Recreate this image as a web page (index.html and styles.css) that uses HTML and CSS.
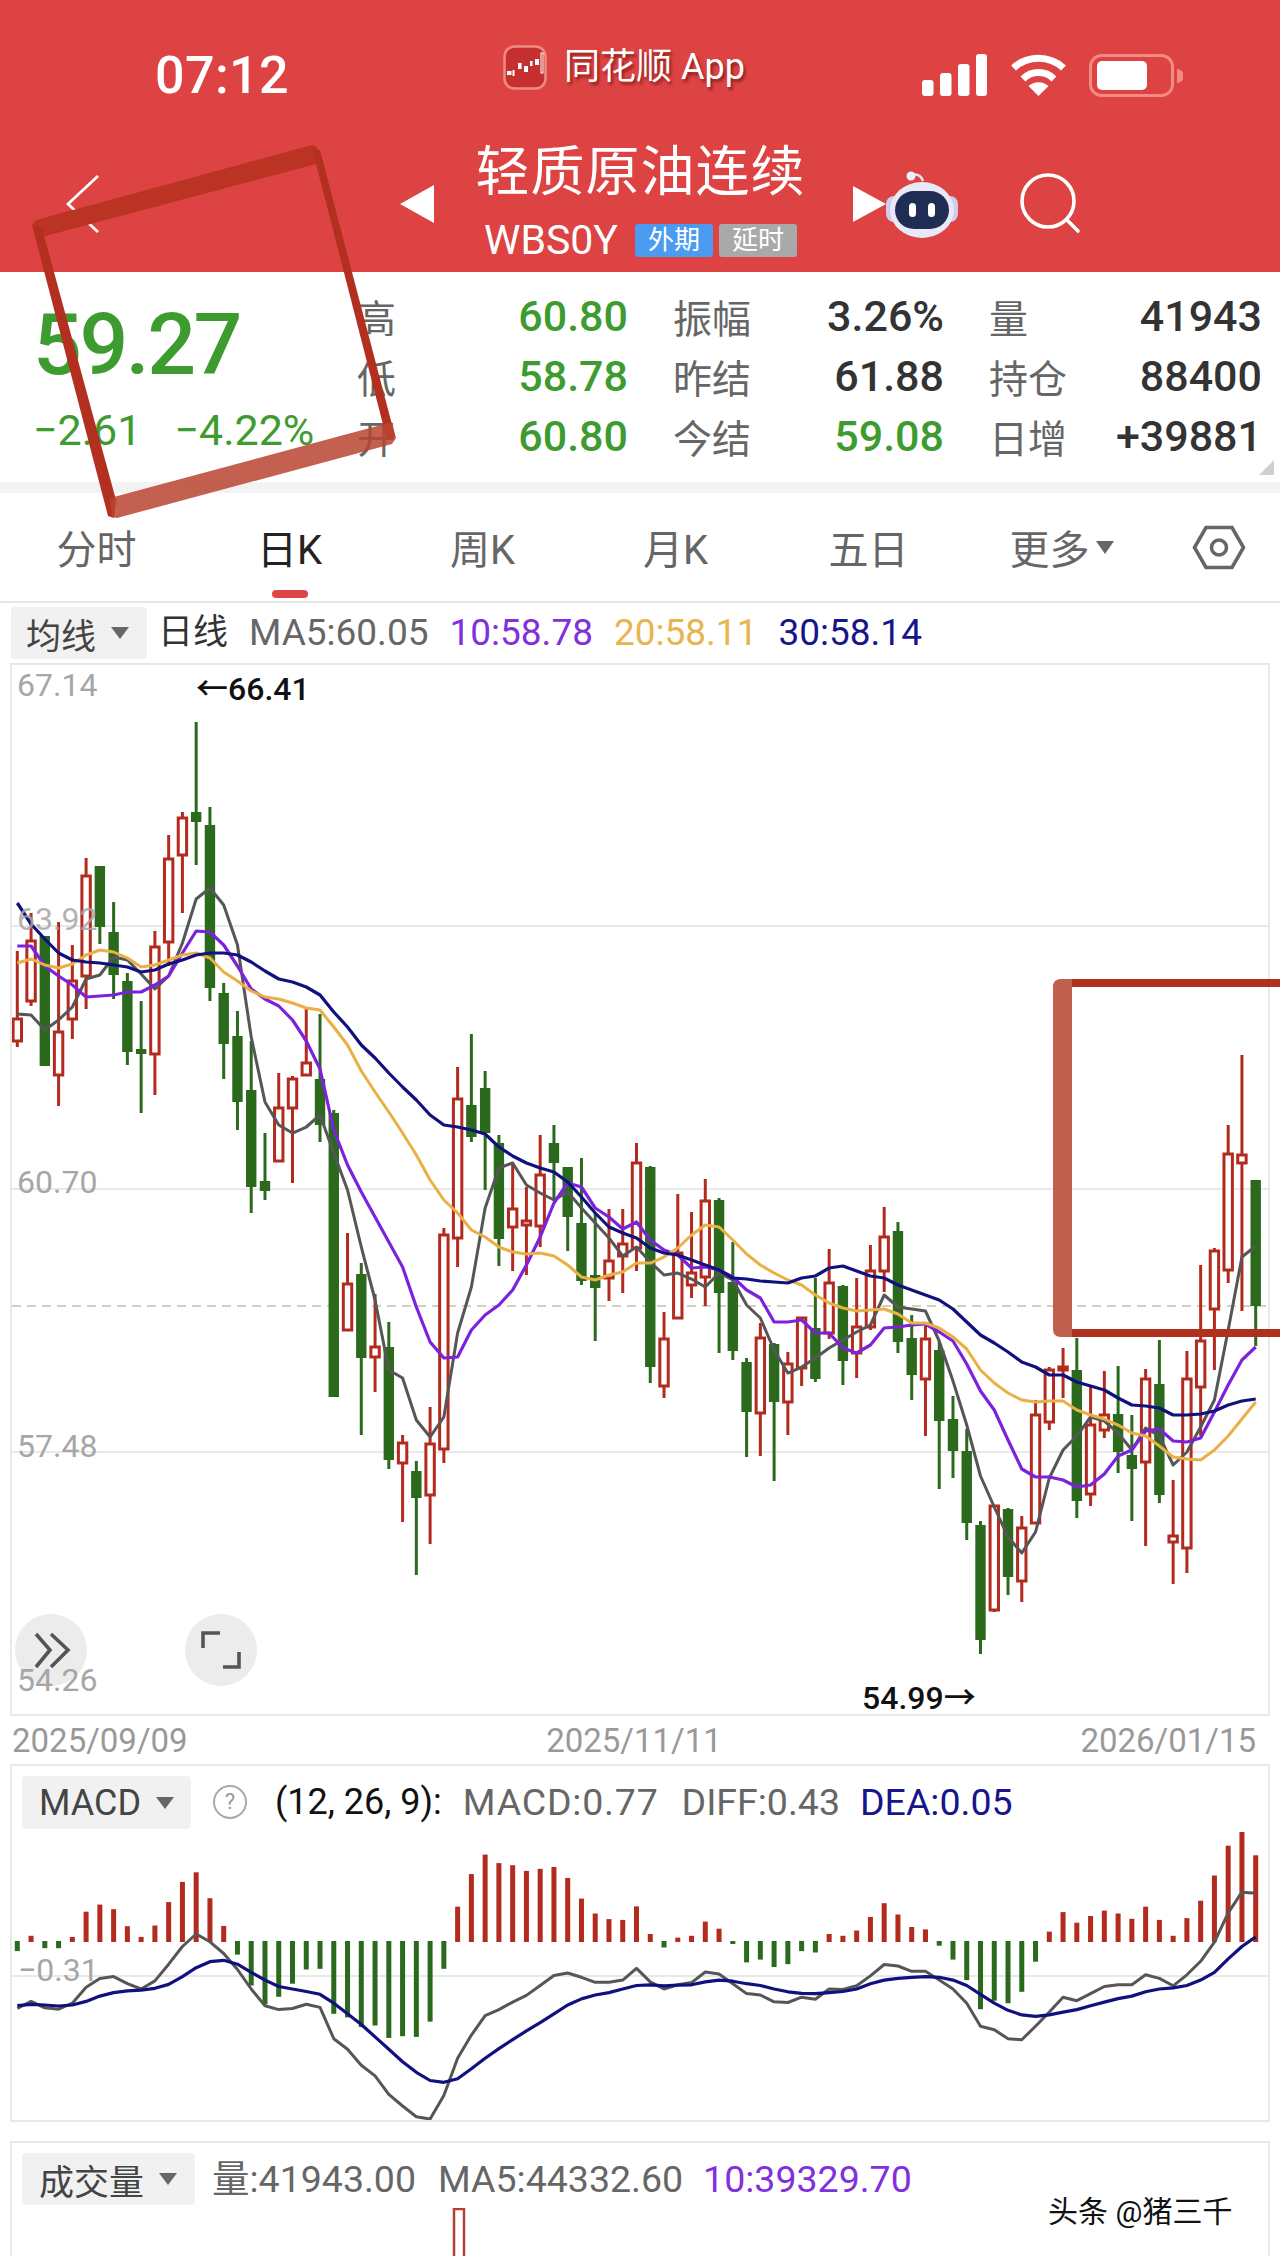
FILE: index.html
```html
<!DOCTYPE html>
<html lang="zh-CN">
<head>
<meta charset="utf-8">
<title>轻质原油连续 WBS0Y</title>
<link rel="stylesheet" href="styles.css">
</head>
<body>
<div class="page">
  <header class="head">
    <div class="status">
      <div class="time">07:12</div>
      <div class="app">
        <svg class="app-logo" width="44" height="45" viewBox="0 0 44 45">
          <rect x="1.5" y="1.5" width="41" height="42" rx="10" fill="#c62f2f" stroke="#f08a84" stroke-width="2.5"/>
          <g fill="#fff">
            <rect x="4" y="26" width="4.5" height="4"/><rect x="9.5" y="25" width="2" height="6"/>
            <rect x="15" y="18" width="3.5" height="6"/><rect x="21" y="21" width="4" height="6"/>
            <rect x="27" y="16" width="2.5" height="5"/><rect x="32" y="14" width="4" height="6"/>
          </g>
          <rect x="38" y="8" width="2" height="20" fill="none" stroke="#fff"/>
        </svg>
        <span class="app-name">同花顺 App</span>
      </div>
      <div class="sys">
        <svg width="65" height="42" viewBox="0 0 65 42" fill="#fff">
          <rect x="0" y="26" width="11.5" height="16" rx="3"/><rect x="18" y="19" width="11.5" height="23" rx="3"/>
          <rect x="36" y="10" width="11.5" height="32" rx="3"/><rect x="54" y="0" width="11" height="42" rx="3"/>
        </svg>
        <svg class="sys-wifi" width="57" height="42" viewBox="0 0 57 42" fill="none" stroke="#fff" stroke-width="7">
          <path d="M3.5 14 A37 37 0 0 1 53.5 14"/>
          <path d="M13 25 A22 22 0 0 1 44 25"/>
          <path d="M28.5 42 L18.5 32 A15 15 0 0 1 38.5 32 Z" fill="#fff" stroke="none"/>
        </svg>
        <svg class="sys-bat" width="94" height="43" viewBox="0 0 94 43">
          <rect x="1.5" y="1.5" width="82" height="40" rx="11" fill="none" stroke="#f28b84" stroke-width="3"/>
          <rect x="8" y="7" width="50" height="29" rx="5" fill="#fff"/>
          <path d="M88 15 A7 7 0 0 1 88 29 Z" fill="#f28b84"/>
        </svg>
      </div>
    </div>
    <nav class="nav">
      <svg class="back" width="34" height="60" viewBox="0 0 34 60" fill="none" stroke="#fff" stroke-width="2.8"><path d="M32 2 L2 30 L32 58"/></svg>
      <div class="tri-left"></div>
      <div class="title-block">
        <div class="title">轻质原油连续</div>
        <div class="code-row">
          <span class="code">WBS0Y</span>
          <span class="badge badge-blue">外期</span>
          <span class="badge badge-gray">延时</span>
        </div>
      </div>
      <div class="tri-right"></div>
      <svg class="robot" width="72" height="68" viewBox="0 0 72 68">
        <path d="M25 6 C30 3 35 5 37 11" fill="none" stroke="#e6e4f6" stroke-width="2.5"/>
        <circle cx="25" cy="6" r="4.5" fill="#efeefa"/>
        <rect x="0" y="26" width="72" height="26" rx="8" fill="#cfcdee"/>
        <ellipse cx="36" cy="40" rx="32" ry="28" fill="#e9e8f8"/>
        <rect x="9" y="21" width="54" height="38" rx="19" fill="#1f2d55"/>
        <rect x="23" y="33" width="7" height="14" rx="3.5" fill="#fff"/>
        <rect x="42" y="33" width="7" height="14" rx="3.5" fill="#fff"/>
      </svg>
      <svg class="search" width="62" height="62" viewBox="0 0 62 62" fill="none" stroke="#fff" stroke-width="3.6"><circle cx="28" cy="28" r="26"/><path d="M47 47 L58 58" stroke-linecap="round"/></svg>
    </nav>
  </header>

  <section class="stats">
    <div class="price">
      <div class="price-main">59.27</div>
      <div class="price-sub"><span>−2.61</span><span>−4.22%</span></div>
    </div>
    <div class="quotes">
      <div class="q"><span class="q-l">高</span><span class="q-v green">60.80</span></div>
      <div class="q"><span class="q-l">振幅</span><span class="q-v dark">3.26%</span></div>
      <div class="q"><span class="q-l">量</span><span class="q-v dark">41943</span></div>
      <div class="q"><span class="q-l">低</span><span class="q-v green">58.78</span></div>
      <div class="q"><span class="q-l">昨结</span><span class="q-v dark">61.88</span></div>
      <div class="q"><span class="q-l">持仓</span><span class="q-v dark">88400</span></div>
      <div class="q"><span class="q-l">开</span><span class="q-v green">60.80</span></div>
      <div class="q"><span class="q-l">今结</span><span class="q-v green">59.08</span></div>
      <div class="q"><span class="q-l">日增</span><span class="q-v dark">+39881</span></div>
    </div>
    <div class="corner"></div>
  </section>
  <div class="band"></div>

  <div class="tabs">
    <div class="tab">分时</div>
    <div class="tab tab-on">日K</div>
    <div class="tab">周K</div>
    <div class="tab">月K</div>
    <div class="tab">五日</div>
    <div class="tab">更多<i class="caret caret-more"></i></div>
    <div class="tab">
      <svg width="54" height="45" viewBox="0 0 54 45" fill="none" stroke="#666" stroke-width="3.6"><path d="M14 2.5 H40 L51.5 22.5 L40 42.5 H14 L2.5 22.5 Z"/><circle cx="27" cy="22.5" r="7.5"/></svg>
    </div>
  </div>

  <div class="legend">
    <div class="chip chip-ma">均线<i class="caret"></i></div>
    <span class="leg leg-day">日线</span>
    <span class="leg c-gray">MA5:60.05</span>
    <span class="leg c-purple">10:58.78</span>
    <span class="leg c-yellow">20:58.11</span>
    <span class="leg c-navy">30:58.14</span>
  </div>

  <section class="panel panel-k">
    <svg class="plot" width="1256" height="1049" viewBox="12 665 1256 1049">
      <g class="grid">
        <line x1="12" x2="1268" y1="926" y2="926"/>
        <line x1="12" x2="1268" y1="1189" y2="1189"/>
        <line x1="12" x2="1268" y1="1452" y2="1452"/>
      </g>
      <line class="dash" x1="12" x2="1268" y1="1306" y2="1306"/>
      <g id="candles"></g>
      <g id="malines"></g>
      <circle class="round" cx="51" cy="1650" r="36"/>
      <circle class="round" cx="221" cy="1650" r="36"/>
      <path class="round-ic" d="M36 1634 L50 1650 L36 1667 M51 1634 L68 1650 L51 1667"/>
      <path class="round-ic" d="M203 1648 V1633 H220 M223 1667 H239 V1652"/>
      <text class="axis" x="17" y="696">67.14</text>
      <text class="axis axis-soft" x="17" y="930">63.92</text>
      <text class="axis" x="17" y="1193">60.70</text>
      <text class="axis" x="17" y="1457">57.48</text>
      <text class="axis" x="17" y="1691">54.26</text>
      <text class="extreme" x="196" y="700">←66.41</text>
      <text class="extreme" x="862" y="1709">54.99→</text>
    </svg>
  </section>

  <div class="dates"><span>2025/09/09</span><span>2025/11/11</span><span>2026/01/15</span></div>

  <section class="panel panel-macd">
    <div class="p-head">
      <div class="chip chip-macd">MACD<i class="caret"></i></div>
      <span class="help">?</span>
      <span class="ptxt ptxt-args">(12, 26, 9):</span>
      <span class="ptxt c-gray ptxt-macd">MACD:0.77</span>
      <span class="ptxt c-gray ptxt-diff">DIFF:0.43</span>
      <span class="ptxt c-navy ptxt-dea">DEA:0.05</span>
    </div>
    <svg class="plot" width="1256" height="288" viewBox="12 1832 1256 288">
      <g class="grid"><line x1="12" x2="1268" y1="1976" y2="1976"/></g>
      <g id="macdbars"></g>
      <g id="macdlines"></g>
      <text class="axis" x="18" y="1981">−0.31</text>
    </svg>
  </section>

  <section class="panel panel-vol">
    <div class="p-head">
      <div class="chip chip-vol">成交量<i class="caret"></i></div>
      <span class="ptxt c-gray ptxt-vol">量:41943.00</span>
      <span class="ptxt c-gray ptxt-vma5">MA5:44332.60</span>
      <span class="ptxt c-purple">10:39329.70</span>
    </div>
    <svg class="plot" width="1256" height="60" viewBox="12 2208 1256 60">
      <rect class="vol-bar" x="454" y="2209" width="10" height="70"/>
    </svg>
  </section>

  <div class="mark">头条 @猪三千</div>

  <svg class="notes" width="1280" height="2256" viewBox="0 0 1280 2256">
    <polygon class="note-dark" points="32,225 36,220 312,145 317,147 320,163 38,238"/>
    <polygon class="note-thin" points="32,225 42,228 116,500 114,518 108,516"/>
    <polygon class="note-thin" points="312,148 320,150 395,436 387,440"/>
    <polygon class="note-soft" points="110,498 392,422 396,438 392,444 117,518 112,517"/>
    <path class="note-soft-fill" d="M1072 979 H1061 Q1053 979 1053 987 V1329 Q1053 1337 1061 1337 H1072 Z"/>
    <rect class="note-bar" x="1072" y="979" width="208" height="8"/>
    <rect class="note-bar" x="1072" y="1329" width="208" height="8"/>
  </svg>
</div>
<script src="chart.js"></script>
</body>
</html>
```
FILE: styles.css
```css
* { box-sizing: border-box; }
html, body { margin: 0; padding: 0; background: #fff; }
body { font-family: Roboto, "Noto Sans CJK SC", sans-serif; }
.page { position: relative; width: 1280px; height: 2256px; overflow: hidden; background: #fff; }

/* header */
.head { height: 272px; background: #dd4342; color: #fff; }
.status { height: 130px; display: grid; grid-template-columns: 503px 419px 1fr; }
.time { padding: 50px 0 0 155px; font-size: 52px; line-height: 52px; font-weight: 500; letter-spacing: .4px; }
.app { display: flex; align-items: center; height: 44px; margin-top: 45px; gap: 17px; }
.app-logo { display: block; flex: none; }
.app-name { font-size: 36px; line-height: 44px; white-space: nowrap; text-shadow: 2px 3px 3px rgba(90, 10, 10, .6); }
.sys { display: flex; align-items: flex-start; padding-top: 54px; }
.sys-wifi { margin-left: 23px; }
.sys-bat { margin-left: 22px; }
.nav { height: 142px; padding-top: 6px; display: grid; align-items: center; grid-template-columns: 66px 334px 34px 419px 33px 134px 135px 1fr; }
.back { grid-column: 2; display: block; }
.tri-left { grid-column: 3; width: 0; height: 0; border-style: solid; border-width: 19px 34px 19px 0; border-color: transparent #fff transparent transparent; }
.tri-right { grid-column: 5; width: 0; height: 0; border-style: solid; border-width: 18px 0 18px 33px; border-color: transparent transparent transparent #fff; }
.title-block { grid-column: 4; align-self: start; margin-top: 9px; padding-right: 6px; text-align: center; }
.title { font-size: 54px; line-height: 56px; letter-spacing: 1px; }
.code-row { display: flex; justify-content: center; align-items: center; height: 34px; margin-top: 22px; }
.code { font-size: 41px; line-height: 34px; margin-right: 17px; }
.badge { width: 78px; height: 33px; border-radius: 3px; font-size: 26px; line-height: 33px; text-align: center; }
.badge-blue { background: #4b9bf0; }
.badge-gray { background: #a9a9a9; margin-left: 6px; }
.robot { grid-column: 6; display: block; }
.search { grid-column: 7; display: block; }

/* quote block */
.stats { position: relative; height: 210px; padding: 14px 19px 0 33px; display: grid; grid-template-columns: 324px 1fr; }
.price-main { height: 118px; font-size: 86px; line-height: 118px; font-weight: 500; letter-spacing: -2.5px; color: #3e9b30; }
.price-sub { height: 52px; margin-top: 0; display: flex; gap: 33px; font-size: 43px; line-height: 52px; color: #3e9b30; }
.quotes { display: grid; grid-template-columns: 271px 271px 273px; grid-auto-rows: 60px; column-gap: 45px; }
.q { display: flex; justify-content: space-between; align-items: center; }
.q-l { font-size: 39px; color: #666; }
.q-v { font-size: 43px; font-weight: 500; }
.green { color: #3e9b30; }
.dark { color: #333; }
.corner { position: absolute; right: 6px; bottom: 7px; width: 0; height: 0; border-style: solid; border-width: 0 0 15px 15px; border-color: transparent transparent #cfcfcf transparent; }
.band { height: 11px; background: #f3f3f3; }

/* tabs */
.tabs { height: 110px; display: grid; grid-template-columns: repeat(6, 193px) 1fr; align-items: center; border-bottom: 2px solid #e6e6e6; }
.tab { position: relative; display: flex; justify-content: center; align-items: center; height: 108px; font-size: 40px; color: #666; }
.tab-on { color: #222; }
.tab-on::after { content: ""; position: absolute; left: 79px; bottom: 3px; width: 36px; height: 8px; border-radius: 4px; background: #e04545; }
.caret { display: inline-block; width: 0; height: 0; margin-left: 15px; border-style: solid; border-width: 12px 9px 0; border-color: #666 transparent transparent; }
.caret-more { margin-left: 6px; border-width: 13px 9px 0; }

/* legend */
.legend { height: 60px; padding: 4px 0 0 11px; display: flex; align-items: flex-start; gap: 21px; font-size: 37px; white-space: nowrap; }
.chip { display: flex; align-items: center; background: #f1f1f1; border-radius: 4px; color: #444; }
.chip-ma { width: 136px; height: 52px; padding-left: 15px; font-size: 35px; margin-right: -10px; }
.leg { line-height: 52px; }
.leg-day { font-size: 35px; color: #333; }
.c-gray { color: #666; }
.c-purple { color: #8230dd; }
.c-yellow { color: #e9b44e; }
.c-navy { color: #16168a; }

/* panels */
.panel { position: relative; margin: 0 10px; border: 2px solid #e8e8e8; }
.panel-k { height: 1053px; }
.panel-macd { height: 358px; }
.panel-vol { height: 140px; margin-top: 19px; }
.plot { display: block; }
.p-head { height: 66px; padding: 10px 0 0 10px; display: flex; align-items: flex-start; white-space: nowrap; }
.panel-vol .p-head { height: 65px; }
.chip-macd { width: 169px; height: 53px; padding-left: 17px; font-size: 36px; }
.chip-vol { width: 173px; height: 52px; padding-left: 17px; font-size: 35px; margin-right: 17px; }
.help { width: 34px; height: 34px; margin: 9px 0 0 22px; border: 2px solid #aaa; border-radius: 50%; font-size: 22px; line-height: 30px; text-align: center; color: #999; }
.ptxt { font-size: 37.5px; line-height: 53px; color: #111; }
.ptxt-args { margin-left: 28px; font-size: 36px; }
.ptxt-macd { margin-left: 21px; letter-spacing: .8px; }
.ptxt-diff { margin-left: 23px; }
.ptxt-dea { margin-left: 20px; }
.ptxt-vma5 { margin-left: 22px; }
.ptxt-vol { margin-right: 0; }
.ptxt-vol + .ptxt-vma5 + .c-purple { margin-left: 20px; }
.ptxt.c-gray { color: #666; }
.ptxt.c-navy { color: #16168a; }
.ptxt.c-purple { color: #8230dd; }

.dates { height: 48px; padding: 0 24px 0 12px; display: flex; justify-content: space-between; align-items: center; font-size: 33px; color: #999; }

/* plot parts */
.grid line { stroke: #e9e9e9; stroke-width: 2; }
.dash { stroke: #c9c1a4; stroke-width: 1.6; stroke-dasharray: 9 6; }
.axis { font-size: 32px; fill: #a6a6a6; }
.axis-soft { opacity: .85; }
.extreme { font-size: 32px; font-weight: 500; fill: #111; }
.round { fill: #ececec; }
.round-ic { fill: none; stroke: #555; stroke-width: 3.6; }
.wick-up { stroke: #b32a1f; stroke-width: 3; }
.wick-down { stroke: #2b6a1d; stroke-width: 3; }
.body-up { fill: #fff; stroke: #b32a1f; stroke-width: 3; }
.body-down { fill: #2b6a1d; }
.ma { fill: none; stroke-width: 3; stroke-linejoin: round; }
.ma-gray { stroke: #565656; }
.ma-purple { stroke: #7d22dc; stroke-width: 3.2; }
.ma-yellow { stroke: #e9b045; }
.ma-navy { stroke: #10107e; stroke-width: 3.2; }
.bar-up { fill: #b32a1f; }
.bar-down { fill: #2b6a1d; }
.vol-bar { fill: #fff; stroke: #b5402f; stroke-width: 2.5; }

/* overlays */
.mark { position: absolute; left: 1048px; top: 2191px; font-size: 30px; line-height: 42px; color: #111; white-space: nowrap; text-shadow: 0 0 2px #fff, 1px 1px 1px #fff; }
.notes { position: absolute; left: 0; top: 0; pointer-events: none; }
.note-dark { fill: #bb3423; }
.note-thin { fill: #b33021; }
.note-soft { fill: rgba(186, 68, 48, .85); }
.note-soft-fill { fill: #c0604e; }
.note-bar { fill: #b03020; }
```
FILE: chart.js
```js
var NS = 'http://www.w3.org/2000/svg';
var X0 = 17.3, STEP = 13.76;
function xAt(i) { return +(X0 + STEP * i).toFixed(2); }
function add(parent, tag, attrs) {
  var e = document.createElementNS(NS, tag);
  for (var k in attrs) e.setAttribute(k, attrs[k]);
  parent.appendChild(e);
  return e;
}
function poly(parent, cls, ys) {
  add(parent, 'polyline', { 'class': 'ma ' + cls, points: ys.map(function (y, i) { return xAt(i) + ',' + y; }).join(' ') });
}

/* r = rising (hollow), g = falling (solid): high, body top, body bottom, low */
var K = 'r951,1019,1041,1047 r913,941,1001,1006 g936,936,1066,1066 r922,1032,1075,1106 r945,981,1019,1039 r858,876,976,1009 g866,866,927,944 g902,932,975,999 g973,981,1052,1065 g1001,1049,1054,1113 r931,947,1054,1095 r835,859,942,966 r812,818,855,913 g722,812,822,865 g807,825,988,1001 g983,993,1044,1079 g1011,1036,1102,1130 g1041,1090,1187,1213 g1133,1181,1191,1200 r1073,1108,1161,1161 r1076,1079,1108,1183 r1009,1063,1075,1075 g1014,1079,1125,1142 g1110,1113,1397,1397 r1233,1284,1330,1330 g1263,1274,1358,1435 r1294,1347,1357,1392 g1322,1347,1460,1469 r1435,1443,1463,1522 g1461,1471,1498,1575 r1407,1444,1495,1544 r1228,1235,1449,1463 r1067,1099,1238,1267 g1034,1105,1137,1142 g1071,1088,1133,1190 g1135,1143,1239,1266 r1163,1209,1227,1271 r1187,1221,1225,1275 r1135,1175,1226,1247 g1125,1143,1163,1200 g1167,1167,1217,1251 g1158,1223,1281,1285 g1213,1275,1288,1341 r1209,1261,1278,1301 r1209,1244,1256,1293 r1143,1163,1248,1271 g1166,1167,1367,1383 r1312,1339,1386,1398 r1194,1253,1318,1318 r1212,1273,1285,1298 r1179,1201,1277,1306 g1198,1200,1293,1353 g1242,1282,1351,1360 g1358,1362,1412,1457 r1323,1338,1413,1456 g1343,1344,1402,1481 r1352,1364,1402,1435 r1318,1318,1368,1386 g1278,1328,1379,1382 r1249,1283,1333,1339 g1285,1286,1361,1385 r1278,1327,1353,1378 r1245,1271,1327,1330 r1207,1237,1271,1292 g1222,1231,1342,1353 g1315,1338,1375,1400 r1326,1339,1379,1436 g1341,1350,1421,1489 g1396,1419,1451,1478 g1429,1451,1523,1540 g1521,1525,1640,1654 r1505,1506,1610,1612 g1508,1509,1577,1595 r1516,1528,1581,1602 r1400,1415,1523,1523 r1367,1370,1422,1430 r1348,1367,1370,1398 g1338,1370,1501,1518 r1387,1425,1494,1506 r1371,1415,1430,1438 g1366,1414,1452,1473 g1415,1455,1469,1521 r1369,1379,1462,1546 g1340,1384,1495,1503 r1480,1536,1542,1584 r1351,1379,1548,1573 r1265,1341,1387,1436 r1248,1251,1309,1370 r1125,1154,1270,1283 r1055,1155,1163,1311 g1180,1180,1306,1346';

var GRAY = [1014,1015,1030,1020,1007,979,975,957,960,974,989,976,943,899,888,905,945,1037,1102,1125,1133,1127,1115,1153,1190,1247,1300,1370,1378,1420,1437,1417,1333,1287,1208,1168,1163,1185,1193,1200,1192,1208,1223,1238,1256,1247,1262,1275,1273,1279,1287,1273,1280,1305,1318,1350,1373,1367,1358,1348,1340,1332,1325,1295,1307,1309,1311,1341,1381,1425,1476,1507,1537,1553,1532,1478,1450,1436,1417,1421,1433,1450,1428,1436,1465,1452,1427,1400,1330,1257,1246];
var PURPLE = [946,946,966,976,985,997,996,995,992,992,985,976,953,931,932,945,966,989,999,1006,1020,1041,1069,1130,1165,1192,1217,1242,1267,1307,1342,1358,1357,1330,1315,1305,1290,1265,1237,1203,1183,1187,1208,1217,1229,1222,1240,1250,1255,1268,1267,1270,1277,1290,1298,1322,1322,1320,1333,1333,1348,1353,1345,1328,1327,1325,1324,1332,1341,1364,1391,1410,1440,1469,1477,1477,1480,1487,1485,1474,1456,1450,1431,1429,1441,1442,1438,1412,1385,1360,1347];
var YELLOW = [963,959,965,968,964,955,950,952,958,967,965,960,955,953,958,972,981,991,997,999,1003,1008,1010,1027,1045,1071,1092,1112,1133,1155,1180,1200,1213,1230,1237,1247,1252,1254,1253,1256,1265,1277,1280,1275,1272,1263,1263,1257,1248,1235,1225,1227,1240,1254,1265,1273,1280,1285,1295,1303,1308,1311,1310,1309,1314,1323,1323,1328,1337,1349,1370,1383,1393,1400,1402,1401,1401,1410,1415,1419,1425,1433,1436,1446,1457,1459,1460,1450,1436,1419,1402];
var NAVY = [903,924,939,953,960,962,963,965,967,972,970,964,960,955,953,953,955,962,971,979,982,987,995,1012,1027,1045,1058,1073,1087,1100,1115,1125,1127,1130,1134,1147,1156,1163,1168,1172,1182,1197,1213,1227,1233,1238,1248,1253,1255,1260,1265,1270,1278,1279,1281,1282,1283,1278,1276,1268,1266,1271,1276,1278,1285,1290,1295,1300,1309,1322,1335,1343,1352,1362,1367,1375,1375,1382,1386,1390,1398,1405,1406,1408,1415,1415,1414,1411,1405,1401,1399];

var candles = document.getElementById('candles');
K.split(' ').forEach(function (s, i) {
  var up = s[0] === 'r', v = s.slice(1).split(',').map(Number), x = xAt(i);
  var w = up ? 'wick-up' : 'wick-down';
  if (v[1] > v[0]) add(candles, 'line', { 'class': w, x1: x, x2: x, y1: v[0], y2: v[1] });
  if (v[3] > v[2]) add(candles, 'line', { 'class': w, x1: x, x2: x, y1: v[2], y2: v[3] });
  if (up) add(candles, 'rect', { 'class': 'body-up', x: x - 4.2, y: v[1], width: 8.4, height: Math.max(v[2] - v[1], 3) });
  else add(candles, 'rect', { 'class': 'body-down', x: x - 5.2, y: v[1], width: 10.4, height: Math.max(v[2] - v[1], 4) });
});

var ma = document.getElementById('malines');
poly(ma, 'ma-gray', GRAY);
poly(ma, 'ma-purple', PURPLE);
poly(ma, 'ma-yellow', YELLOW);
poly(ma, 'ma-navy', NAVY);

/* MACD values are kept in panel units: page y = 1700 + v / 2.82 */
function my(v) { return +(1700 + v / 2.82).toFixed(1); }
var HIST = [708,665,700,700,668,597,577,590,638,668,636,570,513,486,559,637,718,805,858,837,800,760,758,885,895,922,918,953,948,950,907,758,583,491,436,460,466,482,476,471,502,560,602,618,620,582,660,698,670,665,625,645,688,740,732,753,745,708,712,660,665,650,612,573,605,640,647,693,732,790,872,848,855,823,738,653,598,628,609,594,602,617,583,620,665,615,566,495,411,372,438];
var DIFF = [870,850,868,872,855,810,785,780,800,815,792,745,695,660,682,715,760,815,862,873,870,858,867,955,985,1030,1060,1112,1145,1175,1182,1115,1010,945,890,873,852,833,805,777,770,782,796,796,790,757,795,815,803,797,767,773,800,828,832,851,853,838,844,815,816,806,778,746,750,765,765,790,815,855,920,930,955,958,920,880,838,848,828,808,803,803,775,785,806,775,737,683,600,542,545];
var DEA = [862,858,860,863,860,850,835,825,820,818,813,802,780,755,738,734,745,768,790,808,815,822,830,855,885,915,950,985,1020,1050,1073,1078,1068,1040,1010,983,958,933,910,885,860,843,832,825,815,805,803,806,804,803,795,790,793,800,805,815,823,827,828,825,822,815,800,790,785,782,780,782,790,805,830,855,875,888,892,888,880,873,862,852,842,835,823,815,812,805,790,768,730,695,668];

var bars = document.getElementById('macdbars'), ZERO = 1942;
HIST.forEach(function (v, i) {
  var y = my(v), up = y < ZERO;
  add(bars, 'rect', { 'class': up ? 'bar-up' : 'bar-down', x: xAt(i) - 2.5, y: up ? y : ZERO - 1, width: 5, height: up ? ZERO - y : y - ZERO + 1 });
});
var ml = document.getElementById('macdlines');
poly(ml, 'ma-gray', DIFF.map(my));
poly(ml, 'ma-navy', DEA.map(my));
```
